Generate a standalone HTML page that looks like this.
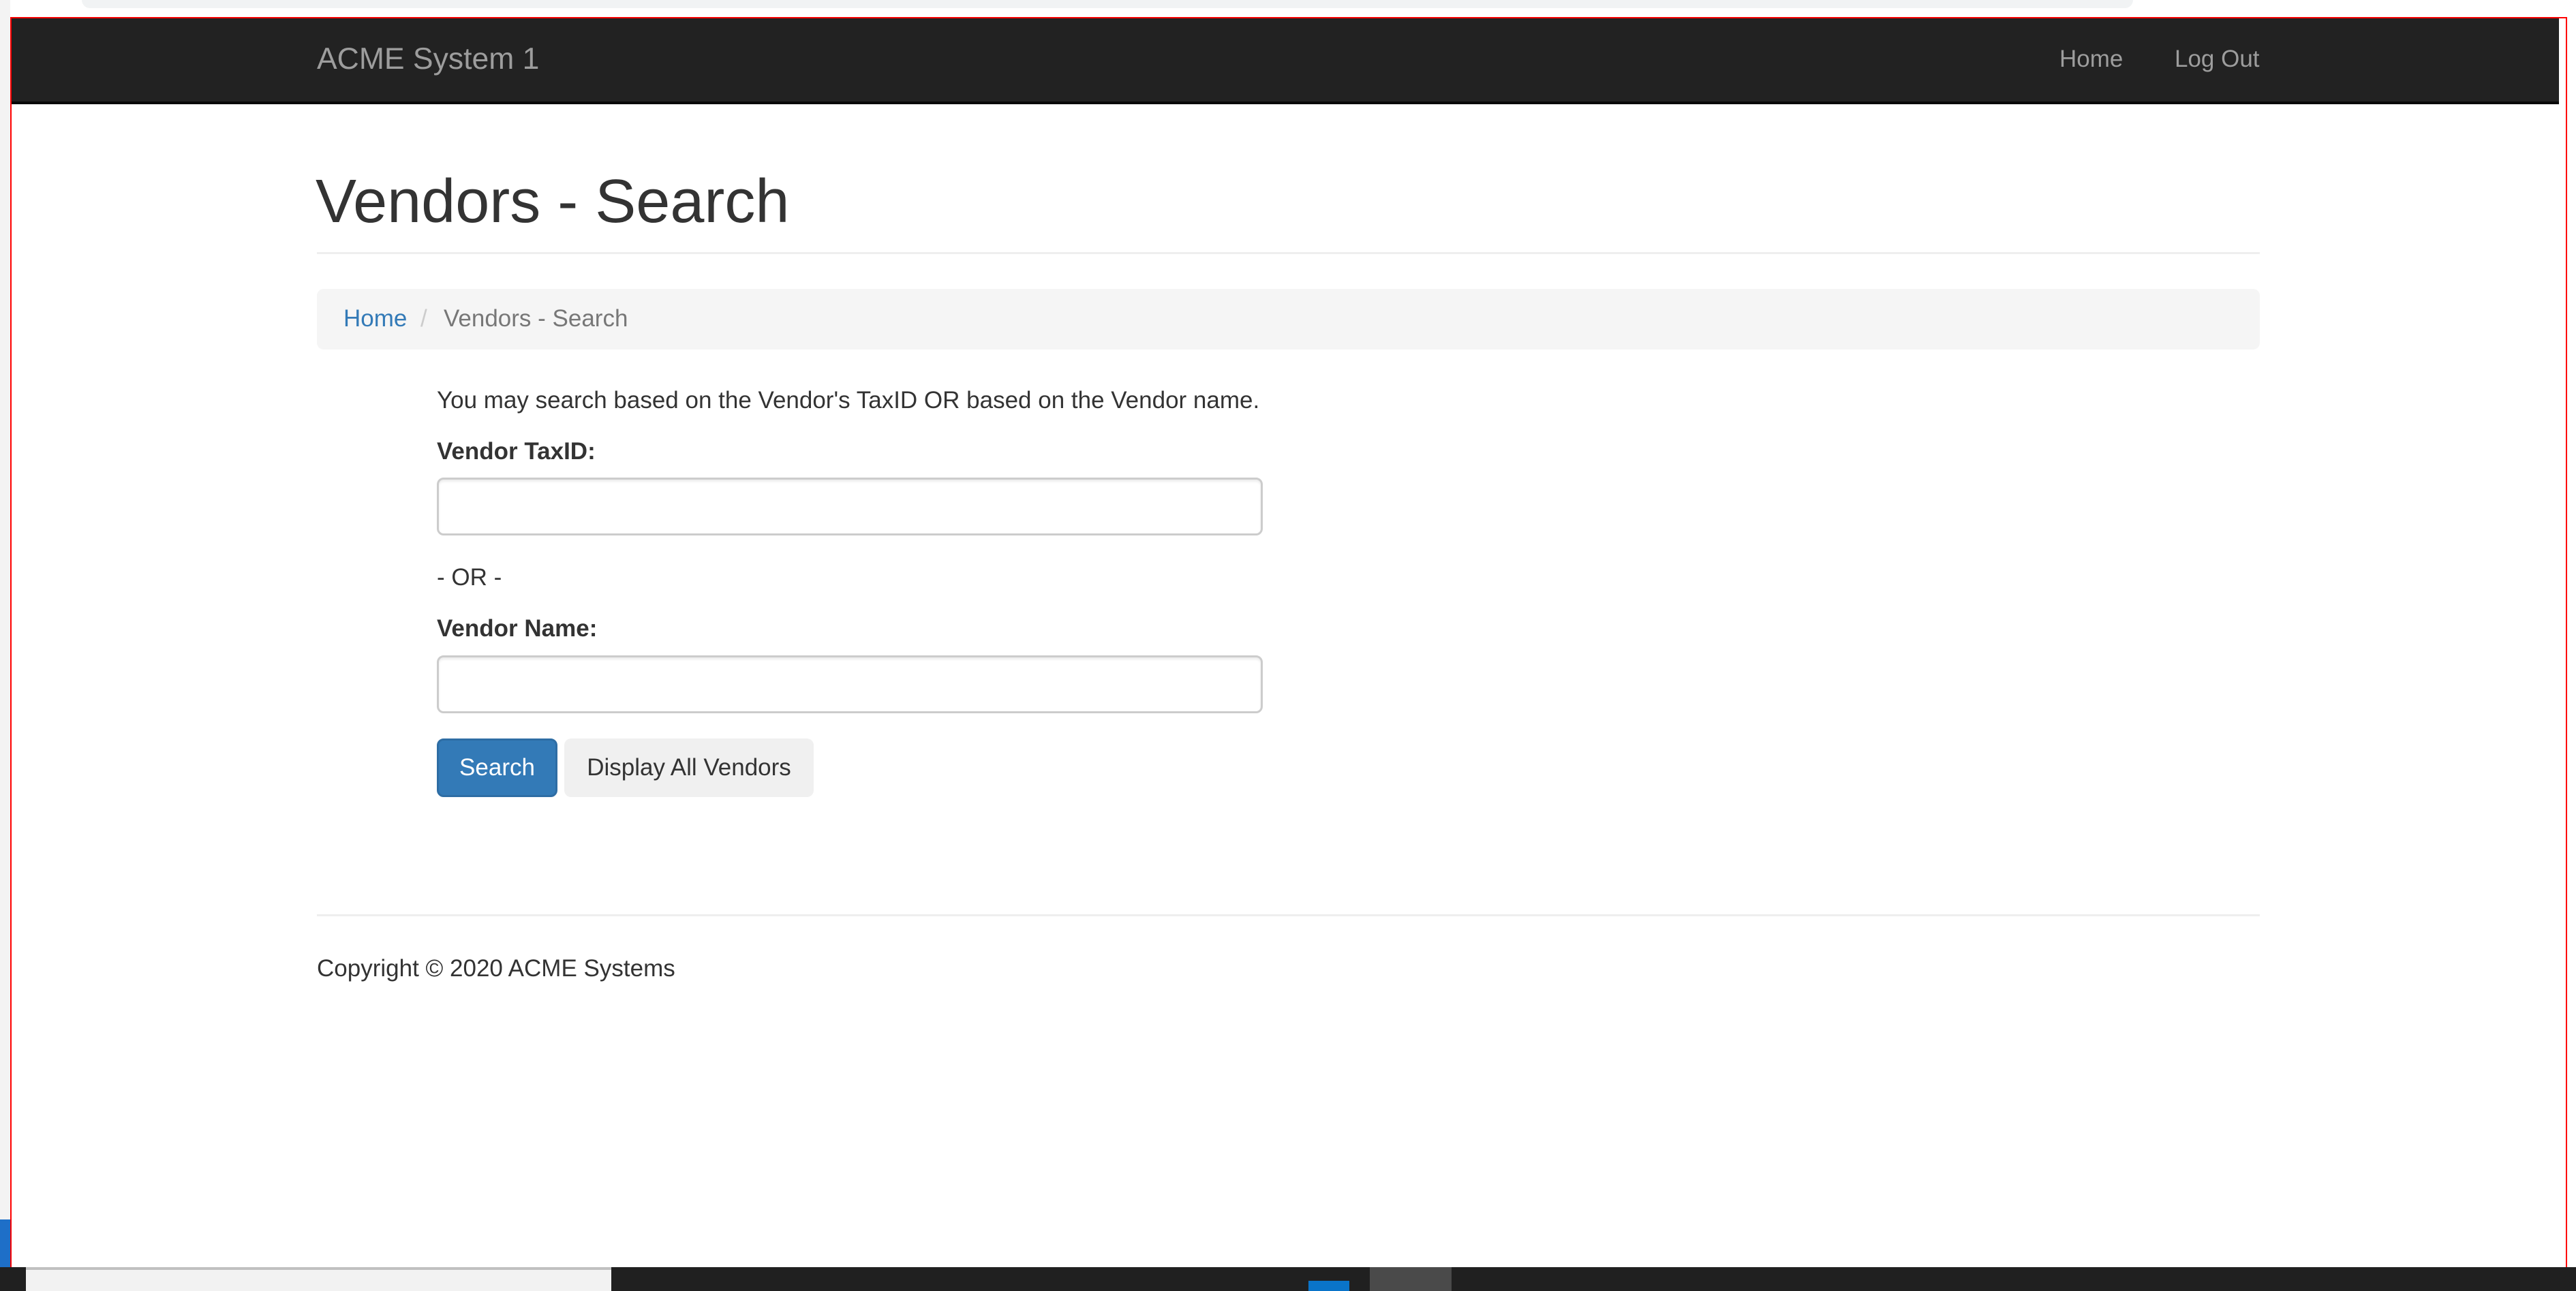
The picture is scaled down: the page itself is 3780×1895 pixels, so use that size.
<!DOCTYPE html>
<html><head><meta charset="utf-8"><style>
*{margin:0;padding:0;box-sizing:border-box}
html,body{width:3780px;height:1895px;overflow:hidden;background:#fff;font-family:"Liberation Sans",Arial,sans-serif;color:#333;font-size:35px}
.a{position:absolute;white-space:nowrap}
</style></head><body>
<div class="a" style="left:0;top:0;width:3780px;height:25px;background:#fff"></div>
<div class="a" style="left:120px;top:0;width:3010px;height:12px;background:#f1f3f4;border-radius:0 0 14px 14px"></div>
<div class="a" style="left:0;top:0;width:15px;height:1860px;background:#f3f3f3"></div>
<div class="a" style="left:0;top:1790px;width:15px;height:70px;background:#1e6fc8"></div>
<div class="a" style="left:15px;top:25px;width:3752px;height:1845px;border:2px solid #f00"></div>
<div class="a" style="left:17px;top:27px;width:3738px;height:126px;background:#222;border-bottom:4px solid #080808"></div>
<div class="a" style="left:465px;top:60px;font-size:44.5px;line-height:54px;color:#9d9d9d">ACME System 1</div>
<div class="a" style="left:3022px;top:66px;font-size:35px;line-height:42px;color:#9d9d9d">Home</div>
<div class="a" style="left:3191px;top:66px;font-size:35px;line-height:42px;color:#9d9d9d">Log Out</div>
<div class="a" style="left:463px;top:244px;font-size:90px;line-height:104px;color:#333">Vendors - Search</div>
<div class="a" style="left:465px;top:370px;width:2851px;height:3px;background:#eee"></div>
<div class="a" style="left:465px;top:424px;width:2851px;height:89px;background:#f5f5f5;border-radius:10px"></div>
<div class="a" style="left:504px;top:447px;line-height:42px;color:#337ab7">Home</div>
<div class="a" style="left:617px;top:447px;line-height:42px;color:#ccc">/</div>
<div class="a" style="left:651px;top:447px;line-height:42px;color:#777">Vendors - Search</div>
<div class="a" style="left:641px;top:567px;line-height:42px">You may search based on the Vendor's TaxID OR based on the Vendor name.</div>
<div class="a" style="left:641px;top:642px;line-height:42px;font-weight:bold">Vendor TaxID:</div>
<div class="a" style="left:641px;top:701px;width:1212px;height:85px;border:3px solid #ccc;border-radius:10px;box-shadow:inset 0 3px 3px rgba(0,0,0,.075)"></div>
<div class="a" style="left:641px;top:827px;line-height:42px">- OR -</div>
<div class="a" style="left:641px;top:902px;line-height:42px;font-weight:bold">Vendor Name:</div>
<div class="a" style="left:641px;top:962px;width:1212px;height:85px;border:3px solid #ccc;border-radius:10px;box-shadow:inset 0 3px 3px rgba(0,0,0,.075)"></div>
<div class="a" style="left:641px;top:1084px;width:177px;height:86px;background:#337ab7;border:3px solid #2e6da4;border-radius:10px;color:#fff;text-align:center;line-height:80px">Search</div>
<div class="a" style="left:828px;top:1084px;width:366px;height:86px;background:#f0f0f0;border-radius:10px;color:#333;text-align:center;line-height:86px">Display All Vendors</div>
<div class="a" style="left:465px;top:1342px;width:2851px;height:3px;background:#eee"></div>
<div class="a" style="left:465px;top:1401px;line-height:42px">Copyright © 2020 ACME Systems</div>
<div class="a" style="left:0;top:1860px;width:3780px;height:35px;background:#202020"></div>
<div class="a" style="left:38px;top:1860px;width:859px;height:35px;background:#f2f2f2;border-top:4px solid #c0c0c0"></div>
<div class="a" style="left:2010px;top:1860px;width:120px;height:35px;background:#4a4a4a"></div>
<div class="a" style="left:1920px;top:1880px;width:60px;height:15px;background:#0a74c9"></div>
</body></html>
